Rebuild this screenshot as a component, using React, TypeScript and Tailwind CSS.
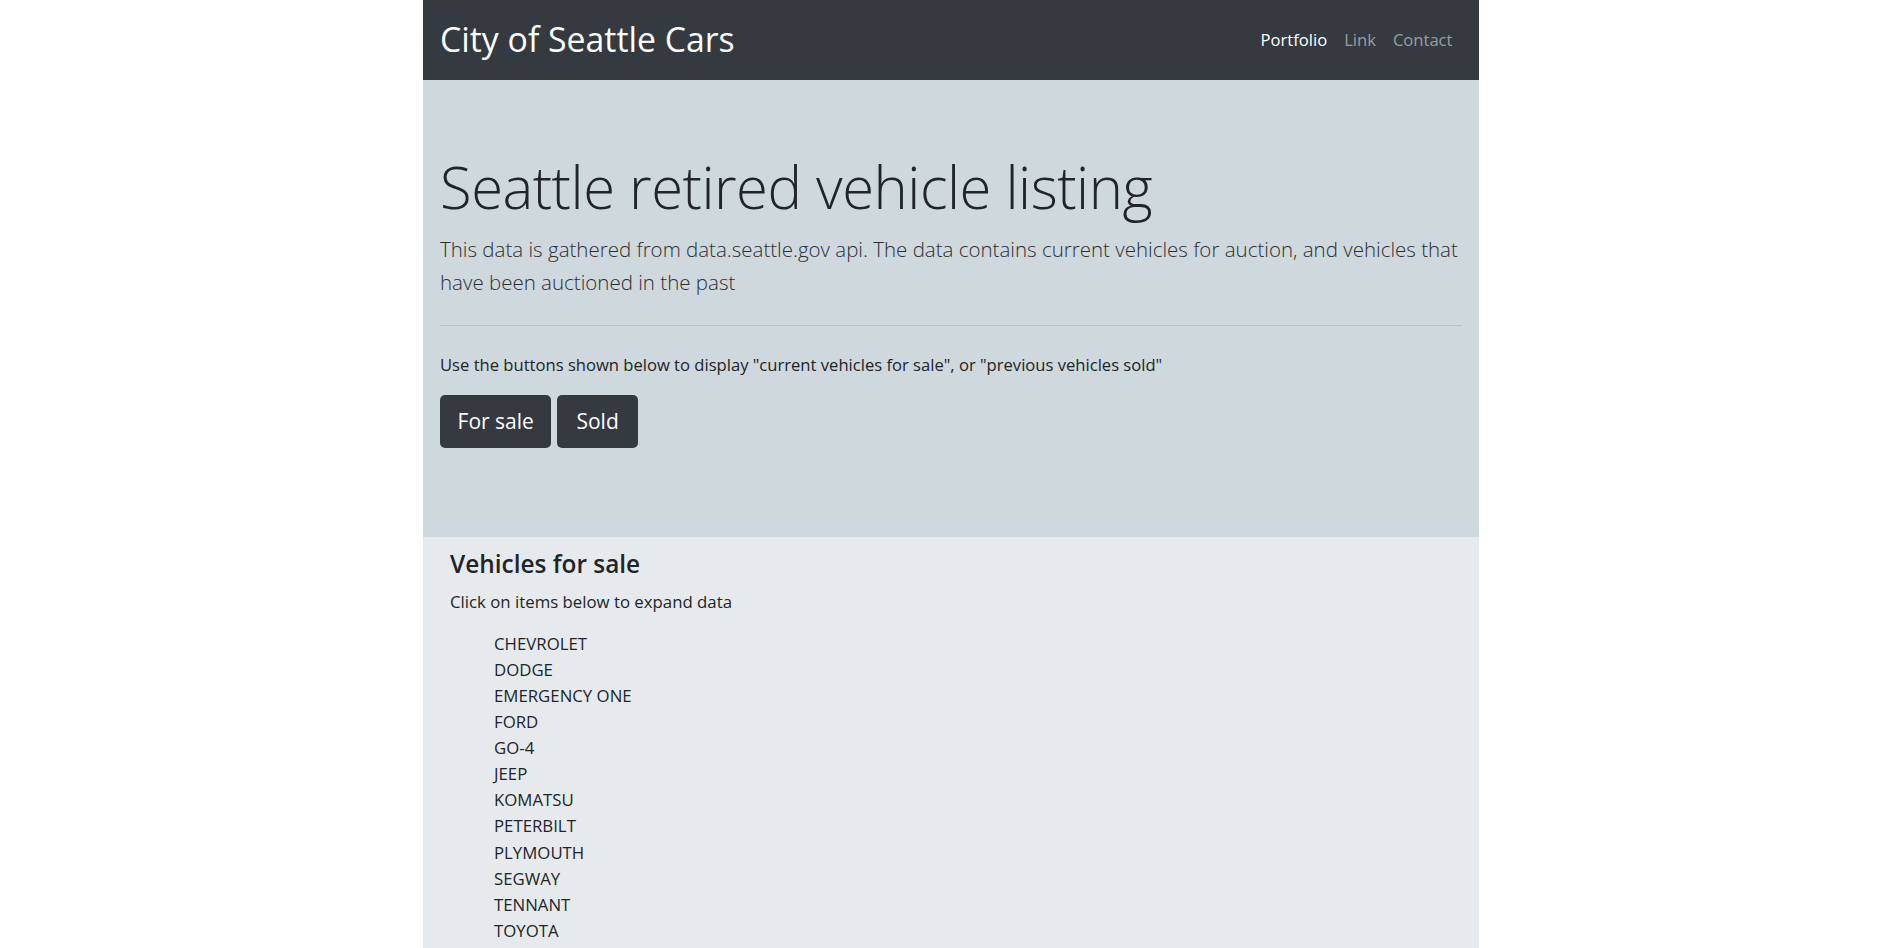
import React from "react";

const makes = [
  "CHEVROLET",
  "DODGE",
  "EMERGENCY ONE",
  "FORD",
  "GO-4",
  "JEEP",
  "KOMATSU",
  "PETERBILT",
  "PLYMOUTH",
  "SEGWAY",
  "TENNANT",
  "TOYOTA",
];

export default function App() {
  return (
    <div className="min-h-screen bg-white font-['Open_Sans',sans-serif] text-[#212529]">
      <div className="mx-auto w-[1056px]">
        <nav className="flex h-[80px] items-center justify-between bg-[#343a40] pl-[17px] pr-[18px]">
          <span className="text-[33.8px] leading-none text-white">City of Seattle Cars</span>
          <ul className="flex items-center text-[16.6px]">
            <li className="px-[8.5px] text-white">Portfolio</li>
            <li className="px-[8.5px] text-white/50">Link</li>
            <li className="px-[8.5px] text-white/50">Contact</li>
          </ul>
        </nav>

        <section className="bg-[#cfd8dc] px-[17px] pb-[89px] pt-[70px]">
          <h1 className="mb-[9px] text-[58px] font-light leading-[74px] tracking-[-0.5px]">
            Seattle retired vehicle listing
          </h1>
          <p className="text-[20.5px] font-light leading-[33px] text-[#2b3035]">
            This data is gathered from data.seattle.gov api. The data contains current vehicles for auction, and vehicles that
            <br />
            have been auctioned in the past
          </p>
          <hr className="my-[26px] border-t border-black/10" />
          <p className="mb-[17px] text-[16.6px] leading-[26.4px]">
            Use the buttons shown below to display "current vehicles for sale", or "previous vehicles sold"
          </p>
          <div className="flex gap-[6px]">
            <button className="h-[53px] rounded-[5px] bg-[#343a40] px-[17.6px] text-[21px] text-white">
              For sale
            </button>
            <button className="h-[53px] rounded-[5px] bg-[#343a40] px-[19px] text-[21px] text-white">
              Sold
            </button>
          </div>
        </section>

        <section className="bg-[#e6eaed] pb-[24px] pl-[27px] pr-[17px] pt-[11px]">
          <h4 className="mb-[9px] text-[24.4px] font-semibold leading-[32px]">Vehicles for sale</h4>
          <p className="mb-[15px] text-[16.8px] leading-[26.4px]">Click on items below to expand data</p>
          <ul className="pl-[44px] text-[16.8px] leading-[26.1px]">
            {makes.map((m) => (
              <li key={m}>{m}</li>
            ))}
          </ul>
        </section>
      </div>
    </div>
  );
}
